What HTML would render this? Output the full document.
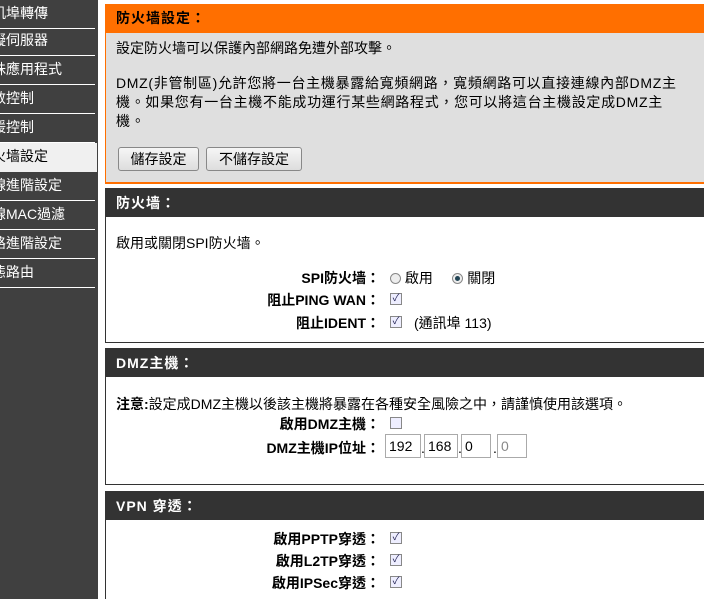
<!DOCTYPE html>
<html style="overflow:hidden;width:704px;height:599px"><head><meta charset="utf-8"><style>
*{margin:0;padding:0;box-sizing:border-box}
body{width:704px;height:599px;overflow:hidden;background:#fff;position:relative;font-family:"Liberation Sans","Noto Sans CJK TC",sans-serif;font-size:14px;color:#000}
.side{position:absolute;left:0;top:0;width:98px;height:599px;background:#404040}
.mi{position:absolute;left:0;width:95px;height:29px;border-bottom:1px solid #fff;color:#fff;font-size:14px;line-height:26px;white-space:nowrap;overflow:hidden;text-indent:-8px}
.mi.act{background:#f0f0f0;color:#000;border-bottom:none;width:97px}
.panel{position:absolute;left:105px;width:610px;border:1px solid #333;border-right:none}
.hd{height:28px;background:#333;color:#fff;font-weight:bold;font-size:14px;line-height:28px;padding-left:10px;letter-spacing:1px}
.abs{position:absolute;white-space:nowrap}
.lab{position:absolute;right:324px;font-weight:bold;white-space:nowrap;font-size:14px}
.cb{position:absolute;width:12px;height:12px;border:1px solid #888;background:#eef;font-size:10px;line-height:10px;text-align:center;color:#225}
.rd{display:inline-block;width:11px;height:11px;border:1px solid #888;border-radius:50%;vertical-align:-1px;background:#eee;position:relative}
.rd.on:after{content:"";position:absolute;left:2px;top:2px;width:5px;height:5px;border-radius:50%;background:#245}
.btn{position:absolute;height:24px;border:1px solid #888;border-radius:3px;background:linear-gradient(#f6f6f6,#ddd);font-size:14px;line-height:22px;text-align:center}
.ip{position:absolute;top:434px;height:24px;border:1px solid #aaa;font-size:14px;line-height:22px;padding-left:3px;background:#fff}
</style></head><body>
<div class="side">
<div class="mi" style="top:0">机埠轉傳</div>
<div class="mi" style="top:27px">擬伺服器</div>
<div class="mi" style="top:56px">殊應用程式</div>
<div class="mi" style="top:85px">数控制</div>
<div class="mi" style="top:114px">援控制</div>
<div class="mi act" style="top:143px">火墙設定</div>
<div class="mi" style="top:172px">線進階設定</div>
<div class="mi" style="top:201px">線MAC過濾</div>
<div class="mi" style="top:230px">路進階設定</div>
<div class="mi" style="top:259px">態路由</div>
</div>

<div class="panel" style="top:4px;height:180px;border-color:#ff6f00;border-width:0 0 2px 1px;background:#dfdfdf">
<div class="hd" style="background:#ff6f00;color:#000;height:29px;line-height:29px">防火墙設定：</div>
</div>
<div class="abs" style="left:116px;top:38px">設定防火墙可以保護內部網路免遭外部攻擊。</div>
<div class="abs" style="left:116px;top:74px;line-height:19px;letter-spacing:0.7px">DMZ(非管制區)允許您將一台主機暴露給寬頻網路，寬頻網路可以直接連線內部DMZ主<br>機。如果您有一台主機不能成功運行某些網路程式，您可以將這台主機設定成DMZ主<br>機。</div>
<div class="btn" style="left:118px;top:147px;width:81px">儲存設定</div>
<div class="btn" style="left:206px;top:147px;width:96px">不儲存設定</div>

<div class="panel" style="top:188px;height:155px"><div class="hd">防火墙：</div></div>
<div class="abs" style="left:116px;top:233px">啟用或關閉SPI防火墙。</div>
<div class="lab" style="top:268px">SPI防火墙：</div>
<div class="abs" style="left:390px;top:268px"><span class="rd"></span> 啟用 &nbsp;&nbsp;&nbsp;&nbsp;<span class="rd on"></span> 關閉</div>
<div class="lab" style="top:290px">阻止PING WAN：</div>
<div class="cb" style="left:390px;top:293px">✓</div>
<div class="lab" style="top:313px">阻止IDENT：</div>
<div class="cb" style="left:390px;top:316px">✓</div>
<div class="abs" style="left:414px;top:313px">(通訊埠 113)</div>

<div class="panel" style="top:348px;height:137px"><div class="hd">DMZ主機：</div></div>
<div class="abs" style="left:116px;top:394px"><b>注意:</b>設定成DMZ主機以後該主機將暴露在各種安全風險之中，請謹慎使用該選項。</div>
<div class="lab" style="top:414px">啟用DMZ主機：</div>
<div class="cb" style="left:390px;top:417px"></div>
<div class="lab" style="top:438px">DMZ主機IP位址：</div>
<div class="ip" style="left:385px;width:36px">192</div>
<div class="abs" style="left:421px;top:440px">.</div>
<div class="ip" style="left:424px;width:34px">168</div>
<div class="abs" style="left:458px;top:440px">.</div>
<div class="ip" style="left:461px;width:30px">0</div>
<div class="abs" style="left:493px;top:440px">.</div>
<div class="ip" style="left:497px;width:30px;color:#888">0</div>

<div class="panel" style="top:491px;height:108px;border-bottom:none"><div class="hd">VPN 穿透：</div></div>
<div class="lab" style="top:529px">啟用PPTP穿透：</div>
<div class="cb" style="left:390px;top:532px">✓</div>
<div class="lab" style="top:551px">啟用L2TP穿透：</div>
<div class="cb" style="left:390px;top:554px">✓</div>
<div class="lab" style="top:573px">啟用IPSec穿透：</div>
<div class="cb" style="left:390px;top:576px">✓</div>
</body></html>
